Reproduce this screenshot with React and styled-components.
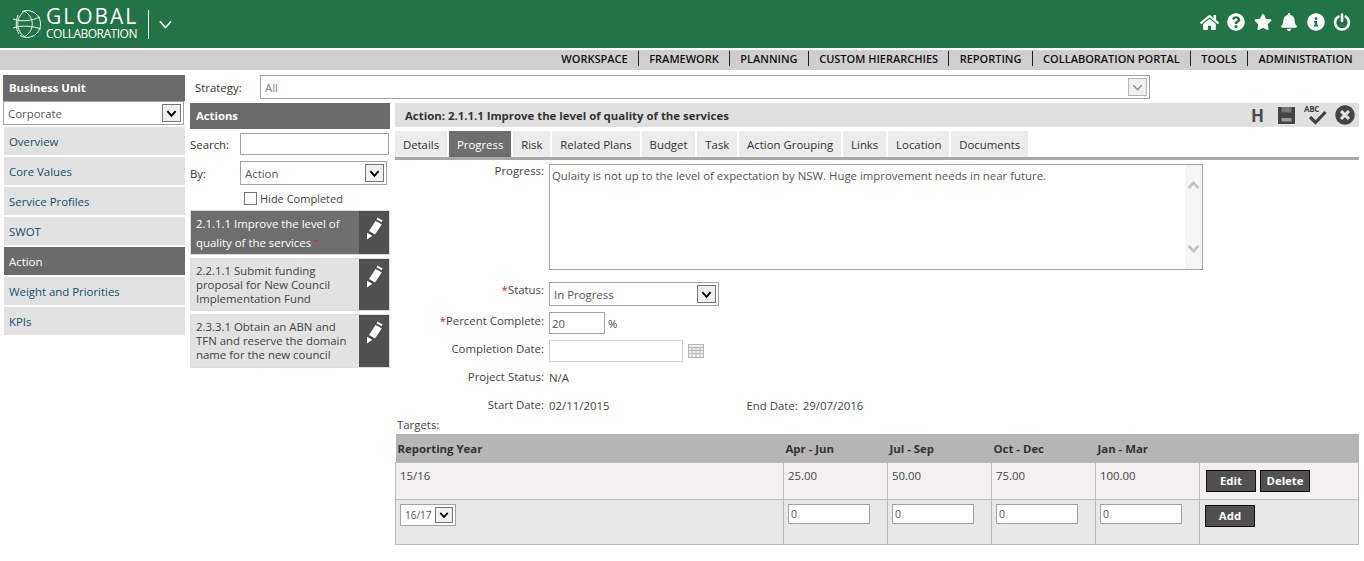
import React from 'react';
import styled, { createGlobalStyle } from 'styled-components';
import { FaHome, FaQuestionCircle, FaStar, FaBell, FaInfoCircle, FaTimesCircle } from 'react-icons/fa';

const GlobalStyle = createGlobalStyle`
  html, body {
    margin: 0;
    padding: 0;
    background: #fff;
    font-family: "Open Sans", "Liberation Sans", sans-serif;
    font-size: 11.4px;
    color: #444;
  }
  * { box-sizing: border-box; }
`;

const Page = styled.div`
  width: 1364px;
  height: 561px;
  overflow: hidden;
`;

const Header = styled.header`
  height: 48px;
  background: #227447;
  display: flex;
  align-items: center;
  justify-content: space-between;
  padding: 0 13px 0 11px;
`;

const Brand = styled.div`
  display: flex;
  align-items: center;
  color: #fff;
`;

const BrandText = styled.div`
  margin-left: 3px;
  display: flex;
  flex-direction: column;
  width: 92px;
`;

const BrandTop = styled.span`
  font-size: 21px;
  line-height: 19px;
  letter-spacing: 1.95px;
`;

const BrandBottom = styled.span`
  font-size: 12px;
  line-height: 16px;
  letter-spacing: -0.5px;
`;

const BrandDivider = styled.span`
  width: 1px;
  height: 29px;
  background: #fff;
  margin: 0 9px 0 10px;
`;

const HeaderIcons = styled.div`
  display: flex;
  align-items: center;
  gap: 8.5px;
  padding-bottom: 4px;
  color: #fff;
  font-size: 18px;
  svg { display: block; }
`;

const MenuBar = styled.nav`
  margin-top: 2px;
  height: 20px;
  background: #cfcfcf;
  display: flex;
  justify-content: flex-end;
  align-items: center;
  padding-right: 1px;
`;

const MenuItem = styled.a`
  font-size: 11px;
  font-weight: 600;
  color: #111;
  padding: 0 10.3px;
  line-height: 15px;
  margin-bottom: 3px;
  border-left: ${(props) => (props.first ? 'none' : '1px solid #222')};
`;

const Main = styled.div`
  display: flex;
  padding: 5px 5px 0 3px;
`;

const LeftColumn = styled.aside`
  width: 182px;
  flex: none;
`;

const PanelHead = styled.div`
  background: #6b6b6b;
  color: #fff;
  font-weight: 700;
  font-size: 11.3px;
  height: 26px;
  display: flex;
  align-items: center;
  padding: 0 0 1px 6px;
`;

const SelectBox = styled.div`
  display: flex;
  align-items: center;
  justify-content: space-between;
  border: 1px solid #a3a3a3;
  background: #fff;
  color: ${(props) => (props.disabled ? '#808080' : '#555')};
  height: ${(props) => props.h || 24}px;
  width: ${(props) => props.w || 181}px;
  padding: 0 2px 0 ${(props) => props.pl || 4}px;
  flex: none;
`;

const SelectArrow = styled.span`
  width: ${(props) => props.size || 19}px;
  height: ${(props) => (props.size ? props.size - 2 : 18)}px;
  border: 1px solid ${(props) => (props.disabled ? '#b5b5b5' : '#777')};
  background: #f0f0f0;
  display: flex;
  align-items: center;
  justify-content: center;
  color: ${(props) => (props.disabled ? '#8c8c8c' : '#000')};
  flex: none;
`;

const SideList = styled.div`
  margin-top: 1px;
  padding-left: 1px;
`;

const SideLink = styled.a`
  display: flex;
  align-items: center;
  height: 28px;
  margin-top: 2px;
  padding-left: 5px;
  background: ${(props) => (props.active ? '#6b6b6b' : '#e2e2e2')};
  color: ${(props) => (props.active ? '#fff' : '#14506b')};
`;

const Content = styled.div`
  flex: 1;
  margin-left: 5px;
`;

const StrategyRow = styled.div`
  display: flex;
  align-items: center;
  height: 24px;
  padding-left: 5px;
`;

const StrategyLabel = styled.span`
  width: 65px;
  color: #333;
`;

const Columns = styled.div`
  display: flex;
  margin-top: 4px;
`;

const ActionsColumn = styled.section`
  width: 200px;
  flex: none;
`;

const FilterRow = styled.div`
  display: flex;
  align-items: center;
  height: ${(props) => props.h}px;
  margin-top: ${(props) => props.mt || 0}px;
`;

const FilterLabel = styled.label`
  width: 50px;
  color: #333;
`;

const TextInput = styled.input`
  width: ${(props) => props.w}px;
  height: ${(props) => props.h}px;
  border: 1px solid ${(props) => (props.faint ? '#d2d2d2' : '#a3a3a3')};
  padding: 0 2px;
  font: inherit;
  font-size: ${(props) => props.fs || 11.4}px;
  color: #555;
  background: #fff;
  outline: none;
`;

const HideRow = styled.label`
  display: flex;
  align-items: center;
  margin: 5px 0 4px 54px;
  height: 16px;
  gap: 3px;
  color: #444;
  font-size: 11px;
`;

const CheckSquare = styled.span`
  width: 13px;
  height: 13px;
  border: 1px solid #777;
  background: #fff;
`;

const ActionItem = styled.div`
  display: flex;
  justify-content: space-between;
  height: ${(props) => props.h}px;
  margin-bottom: 3px;
  border: 1px solid #dcdcdc;
  background: ${(props) => (props.active ? '#6e6e6e' : '#e2e2e2')};
  color: ${(props) => (props.active ? '#fff' : '#444')};
`;

const ActionText = styled.div`
  padding: ${(props) => (props.active ? '3px' : '5px')} 4px 0 5px;
  line-height: ${(props) => (props.active ? '19px' : '14px')};
  width: 168px;
`;

const RedMark = styled.span`
  color: #e01b1b;
  font-size: 8px;
  line-height: 0;
  margin-left: 3px;
  vertical-align: 3px;
`;

const EditTile = styled.div`
  width: 30px;
  background: #505050;
  display: flex;
  justify-content: center;
  padding-top: 6px;
`;

const DetailColumn = styled.section`
  margin-left: 5px;
  width: 964px;
`;

const TitleBar = styled.div`
  height: 24px;
  background: #e0e0e0;
  display: flex;
  align-items: center;
  justify-content: space-between;
  padding: 0 4px 0 10px;
  color: #333;
  font-weight: 700;
`;

const TitleIcons = styled.div`
  display: flex;
  align-items: center;
  color: #444;
  svg { display: block; }
`;

const HLetter = styled.span`
  font-size: 17px;
  font-weight: 700;
  color: #4a4a4a;
  margin-right: 14px;
`;

const SpellIcon = styled.span`
  position: relative;
  display: block;
  width: 23px;
  height: 20px;
  margin: 0 8px 0 9px;
`;

const SpellText = styled.span`
  position: absolute;
  left: 0;
  top: -1px;
  font-size: 8px;
  line-height: 10px;
  font-weight: 700;
  letter-spacing: -0.3px;
  color: #444;
`;

const SpellCheck = styled.span`
  position: absolute;
  right: 0;
  bottom: 0;
`;

const Tabs = styled.div`
  display: flex;
  gap: 2px;
  margin-top: 4px;
  height: 29px;
  border-bottom: 3px solid #a8a8a8;
`;

const Tab = styled.a`
  display: flex;
  align-items: center;
  height: 26px;
  padding: 0 7.9px;
  background: ${(props) => (props.active ? '#6e6e6e' : '#ececec')};
  color: ${(props) => (props.active ? '#fff' : '#333')};
`;

const FormGrid = styled.div`
  display: grid;
  grid-template-columns: 149px 1fr;
  column-gap: 5px;
  align-items: start;
`;

const FieldLabel = styled.label`
  text-align: right;
  color: #444;
  line-height: 16px;
  margin-top: ${(props) => props.mt || 0}px;
`;

const Required = styled.span`
  color: #d22;
`;

const FieldValue = styled.div`
  display: flex;
  align-items: center;
  height: ${(props) => props.h}px;
  margin-top: ${(props) => props.mt || 0}px;
  color: #444;
`;

const ProgressBox = styled.div`
  width: 654px;
  height: 106px;
  border: 1px solid #a3a3a3;
  display: flex;
  margin-top: 4px;
`;

const ProgressText = styled.div`
  flex: 1;
  padding: 3px 2px;
  color: #555;
`;

const FakeScroll = styled.div`
  width: 17px;
  background: #f5f5f5;
  display: flex;
  flex-direction: column;
  justify-content: space-between;
  align-items: center;
  padding: 14px 0;
  color: #c2c2c2;
`;

const PercentSign = styled.span`
  margin-left: 3px;
`;

const CalendarWrap = styled.span`
  margin-left: 5px;
  display: flex;
`;

const EndDate = styled.span`
  margin-left: 137px;
  margin-right: 5px;
`;

const TargetsLabel = styled.div`
  margin: 4px 0 0 2px;
  height: 15px;
  line-height: 15px;
  color: #444;
`;

const Table = styled.table`
  width: 964px;
  table-layout: fixed;
  border-collapse: collapse;
  margin-top: 2px;
`;

const Th = styled.th`
  background: #b5b5b5;
  height: 28px;
  text-align: left;
  font-size: 11.4px;
  font-weight: 700;
  color: #333;
  padding: 1px 3px 0 2px;
`;

const Td = styled.td`
  height: ${(props) => props.h}px;
  background: ${(props) => (props.alt ? '#e8e8e8' : '#f2f0f1')};
  border: 1px solid #bcbcbc;
  vertical-align: top;
  padding: ${(props) => props.pt || 5}px 4px 0 ${(props) => props.pl || 4}px;
  color: #444;
`;

const ActionButton = styled.button`
  height: 22px;
  width: ${(props) => props.w}px;
  margin-left: ${(props) => props.ml || 0}px;
  margin-top: ${(props) => props.mt || 0}px;
  background: #505050;
  border: 1px solid #111;
  color: #fff;
  font: inherit;
  font-weight: 700;
  padding: 0;
`;

const YearSelect = styled(SelectBox)`
  font-size: 10px;
`;

const Chevron = ({ size = 11, weight = 2 }) => (
  <svg width={size} height={size} viewBox="0 0 12 12" fill="none" stroke="currentColor" strokeWidth={weight}>
    <path d="M1.5 3.5 L6 8.5 L10.5 3.5" />
  </svg>
);

const ChevronUp = ({ size = 13 }) => (
  <svg width={size} height={size} viewBox="0 0 12 12" fill="none" stroke="currentColor" strokeWidth="2.4">
    <path d="M1.5 8.5 L6 3.5 L10.5 8.5" />
  </svg>
);

const GlobeLogo = () => (
  <svg width="32" height="32" viewBox="0 0 32 32" fill="none" stroke="#fff" strokeWidth="0.9">
    <path d="M11 3.5 A13.5 13.5 0 1 1 9 27.5" />
    <path d="M15 2.5 C4 8 4 24 15 29.5" />
    <path d="M13 3 C24 9 24 23 13 29" />
    <path d="M2 11 C10 14 20 13 29 9" />
    <path d="M2 20 C10 17 22 18 30 21" />
    <path d="M7 7 C5 12 4 20 8 26" />
  </svg>
);

const PowerIcon = () => (
  <svg width="18" height="18" viewBox="0 0 18 18" fill="none" stroke="#fff" strokeWidth="2.6" strokeLinecap="round">
    <path d="M5.3 3.6 A7 7 0 1 0 12.7 3.6" />
    <path d="M9 1.5 V8" />
  </svg>
);

const Pencil = () => (
  <svg width="17" height="23" viewBox="0 0 17 23" fill="#fff">
    <path d="M11.5 0.5 L16.5 3.4 L15.5 5.2 L10.5 2.3 Z" />
    <path d="M9.5 4 L15.8 7.6 L9 17.6 L3 14 Z" />
    <path d="M1 15.7 L6.3 18.8 L1 22.5 Z" />
  </svg>
);

const SaveIcon = () => (
  <svg width="17" height="17" viewBox="0 0 17 17">
    <rect width="17" height="17" fill="#444" />
    <rect x="3.5" y="0" width="10" height="5.5" fill="#777" />
    <rect x="3.5" y="11" width="10" height="3.5" fill="#9a9a9a" />
  </svg>
);

const CheckMark = () => (
  <svg width="19" height="15" viewBox="0 0 19 15" fill="none" stroke="#444" strokeWidth="3.2">
    <path d="M2 7 L7.5 12.5 L17.5 2" />
  </svg>
);

const CalendarIcon = () => (
  <svg width="16" height="14" viewBox="0 0 16 14" fill="none" stroke="#b9b9b9">
    <rect x="0.5" y="0.5" width="15" height="13" fill="#eee" />
    <path d="M0.5 3.5 H15.5 M0.5 6.5 H15.5 M0.5 9.5 H15.5 M4 3.5 V13.5 M8 3.5 V13.5 M12 3.5 V13.5" />
  </svg>
);

const menu = ['WORKSPACE', 'FRAMEWORK', 'PLANNING', 'CUSTOM HIERARCHIES', 'REPORTING', 'COLLABORATION PORTAL', 'TOOLS', 'ADMINISTRATION'];
const sideLinks = ['Overview', 'Core Values', 'Service Profiles', 'SWOT', 'Action', 'Weight and Priorities', 'KPIs'];
const tabs = ['Details', 'Progress', 'Risk', 'Related Plans', 'Budget', 'Task', 'Action Grouping', 'Links', 'Location', 'Documents'];
const quarters = ['Apr - Jun', 'Jul - Sep', 'Oct - Dec', 'Jan - Mar'];

const App = () => {
  return (
    <Page>
      <GlobalStyle />
      <Header>
        <Brand>
          <GlobeLogo />
          <BrandText>
            <BrandTop>GLOBAL</BrandTop>
            <BrandBottom>COLLABORATION</BrandBottom>
          </BrandText>
          <BrandDivider />
          <Chevron size={15} weight={1.3} />
        </Brand>
        <HeaderIcons>
          <FaHome size={19} />
          <FaQuestionCircle />
          <FaStar />
          <FaBell />
          <FaInfoCircle />
          <PowerIcon />
        </HeaderIcons>
      </Header>
      <MenuBar>
        {menu.map((item, i) => (
          <MenuItem key={item} first={i === 0}>{item}</MenuItem>
        ))}
      </MenuBar>
      <Main>
        <LeftColumn>
          <PanelHead>Business Unit</PanelHead>
          <SelectBox>
            Corporate
            <SelectArrow><Chevron /></SelectArrow>
          </SelectBox>
          <SideList>
            {sideLinks.map((link) => (
              <SideLink key={link} active={link === 'Action'}>{link}</SideLink>
            ))}
          </SideList>
        </LeftColumn>
        <Content>
          <StrategyRow>
            <StrategyLabel>Strategy:</StrategyLabel>
            <SelectBox w={890} disabled>
              All
              <SelectArrow disabled><Chevron weight={1.5} /></SelectArrow>
            </SelectBox>
          </StrategyRow>
          <Columns>
            <ActionsColumn>
              <PanelHead>Actions</PanelHead>
              <FilterRow h={22} mt={4}>
                <FilterLabel>Search:</FilterLabel>
                <TextInput w={149} h={22} />
              </FilterRow>
              <FilterRow h={24} mt={6}>
                <FilterLabel>By:</FilterLabel>
                <SelectBox w={147}>
                  Action
                  <SelectArrow><Chevron /></SelectArrow>
                </SelectBox>
              </FilterRow>
              <HideRow><CheckSquare />Hide Completed</HideRow>
              <ActionItem active h={45}>
                <ActionText active>
                  2.1.1.1 Improve the level of quality of the services<RedMark>*</RedMark>
                </ActionText>
                <EditTile><Pencil /></EditTile>
              </ActionItem>
              <ActionItem h={53}>
                <ActionText>2.2.1.1 Submit funding proposal for New Council Implementation Fund</ActionText>
                <EditTile><Pencil /></EditTile>
              </ActionItem>
              <ActionItem h={54}>
                <ActionText>2.3.3.1 Obtain an ABN and TFN and reserve the domain name for the new council</ActionText>
                <EditTile><Pencil /></EditTile>
              </ActionItem>
            </ActionsColumn>
            <DetailColumn>
              <TitleBar>
                Action: 2.1.1.1 Improve the level of quality of the services
                <TitleIcons>
                  <HLetter>H</HLetter>
                  <SaveIcon />
                  <SpellIcon>
                    <SpellText>ABC</SpellText>
                    <SpellCheck><CheckMark /></SpellCheck>
                  </SpellIcon>
                  <FaTimesCircle size={20} />
                </TitleIcons>
              </TitleBar>
              <Tabs>
                {tabs.map((tab) => (
                  <Tab key={tab} active={tab === 'Progress'}>{tab}</Tab>
                ))}
              </Tabs>
              <FormGrid>
                <FieldLabel mt={3}>Progress:</FieldLabel>
                <ProgressBox>
                  <ProgressText>Qulaity is not up to the level of expectation by NSW. Huge improvement needs in near future.</ProgressText>
                  <FakeScroll>
                    <ChevronUp />
                    <Chevron size={13} weight={2.4} />
                  </FakeScroll>
                </ProgressBox>
                <FieldLabel mt={12}><Required>*</Required>Status:</FieldLabel>
                <FieldValue h={24} mt={12}>
                  <SelectBox w={170}>
                    In Progress
                    <SelectArrow><Chevron /></SelectArrow>
                  </SelectBox>
                </FieldValue>
                <FieldLabel mt={7}><Required>*</Required>Percent Complete:</FieldLabel>
                <FieldValue h={22} mt={6}>
                  <TextInput w={56} h={22} defaultValue="20" />
                  <PercentSign>%</PercentSign>
                </FieldValue>
                <FieldLabel mt={7}>Completion Date:</FieldLabel>
                <FieldValue h={22} mt={6}>
                  <TextInput w={134} h={22} faint />
                  <CalendarWrap><CalendarIcon /></CalendarWrap>
                </FieldValue>
                <FieldLabel mt={7}>Project Status:</FieldLabel>
                <FieldValue h={16} mt={7}>N/A</FieldValue>
                <FieldLabel mt={12}>Start Date:</FieldLabel>
                <FieldValue h={16} mt={12}>
                  02/11/2015
                  <EndDate>End Date:</EndDate>
                  29/07/2016
                </FieldValue>
              </FormGrid>
              <TargetsLabel>Targets:</TargetsLabel>
              <Table>
                <colgroup>
                  <col style={{ width: 388 }} />
                  <col style={{ width: 104 }} />
                  <col style={{ width: 104 }} />
                  <col style={{ width: 104 }} />
                  <col style={{ width: 104 }} />
                  <col />
                </colgroup>
                <thead>
                  <tr>
                    <Th>Reporting Year</Th>
                    {quarters.map((q) => <Th key={q}>{q}</Th>)}
                    <Th />
                  </tr>
                </thead>
                <tbody>
                  <tr>
                    <Td h={37}>15/16</Td>
                    <Td h={37}>25.00</Td>
                    <Td h={37}>50.00</Td>
                    <Td h={37}>75.00</Td>
                    <Td h={37}>100.00</Td>
                    <Td h={37} pl={6}>
                      <ActionButton w={50} mt={2}>Edit</ActionButton>
                      <ActionButton w={50} ml={4} mt={2}>Delete</ActionButton>
                    </Td>
                  </tr>
                  <tr>
                    <Td h={45} alt pt={4}>
                      <YearSelect w={56} h={22}>
                        16/17
                        <SelectArrow size={18}><Chevron size={10} /></SelectArrow>
                      </YearSelect>
                    </Td>
                    {[0, 1, 2, 3].map((n) => (
                      <Td h={45} alt pt={4} key={n}>
                        <TextInput w={82} h={20} fs={10.5} defaultValue="0" />
                      </Td>
                    ))}
                    <Td h={45} alt pt={5} pl={5}>
                      <ActionButton w={50}>Add</ActionButton>
                    </Td>
                  </tr>
                </tbody>
              </Table>
            </DetailColumn>
          </Columns>
        </Content>
      </Main>
    </Page>
  );
};

export default App;
